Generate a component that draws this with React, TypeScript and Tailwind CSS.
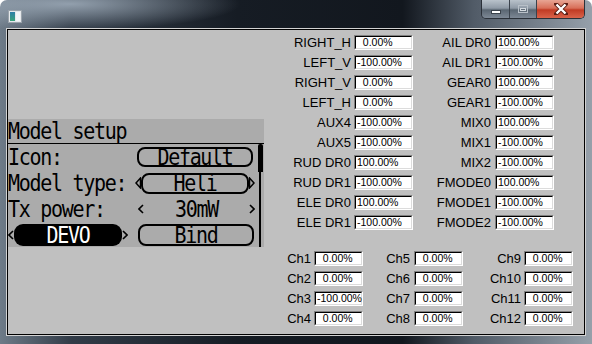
import React from 'react';

const topLeft: [string, string][] = [
  ['RIGHT_H', '  0.00%'],
  ['LEFT_V', '-100.00%'],
  ['RIGHT_V', '  0.00%'],
  ['LEFT_H', '  0.00%'],
  ['AUX4', '-100.00%'],
  ['AUX5', '-100.00%'],
  ['RUD DR0', '100.00%'],
  ['RUD DR1', '-100.00%'],
  ['ELE DR0', '100.00%'],
  ['ELE DR1', '-100.00%'],
];

const topRight: [string, string][] = [
  ['AIL DR0', '100.00%'],
  ['AIL DR1', '-100.00%'],
  ['GEAR0', '100.00%'],
  ['GEAR1', '-100.00%'],
  ['MIX0', '100.00%'],
  ['MIX1', '-100.00%'],
  ['MIX2', '-100.00%'],
  ['FMODE0', '100.00%'],
  ['FMODE1', '-100.00%'],
  ['FMODE2', '-100.00%'],
];

const chanValue = (n: number) => (n === 3 ? '-100.00%' : '  0.00%');

// sunken win32 edit box
const Field = ({ value, className }: { value: string; className: string }) => (
  <div
    className={`${className} h-[15px] border border-t-[#808080] border-l-[#808080] border-r-white border-b-white`}
  >
    <div className="h-full flex items-center bg-white border border-t-black border-l-black border-r-[#dcdcdc] border-b-[#dcdcdc] pl-px text-[10.5px] leading-none whitespace-pre text-black">
      {value}
    </div>
  </div>
);

const Chevron = ({ dir }: { dir: 'l' | 'r' }) => (
  <svg width="6" height="10" viewBox="0 0 6 10" className="shrink-0">
    <polyline
      points={dir === 'l' ? '5,1 1,5 5,9' : '1,1 5,5 1,9'}
      fill="none"
      stroke="black"
      strokeWidth="1.6"
    />
  </svg>
);

const Tri = ({ dir }: { dir: 'l' | 'r' }) => (
  <svg width="6" height="12" viewBox="0 0 6 12" className="shrink-0">
    <polygon
      points={dir === 'l' ? '5.5,1 1,6 5.5,11' : '0.5,1 5,6 0.5,11'}
      fill="none"
      stroke="black"
      strokeWidth="1.5"
    />
  </svg>
);

// lcd glyphs are taller than they are wide
const T = ({ children }: { children: React.ReactNode }) => (
  <span className="inline-block scale-y-[1.12]">{children}</span>
);

const Lcd = () => (
  <div className="w-[256px] h-[128px] bg-[#ababab] flex flex-col font-['DejaVu_Sans_Mono',monospace] text-[20px] leading-none tracking-[-1.3px] text-black">
    <div className="h-[24px] flex items-center">
      <T>Model setup</T>
    </div>
    <div className="flex-1 flex border-t border-black">
      <div className="flex-1 flex flex-col">
        <div className="h-[26px] flex items-center">
          <span className="w-[129px]">
            <T>Icon:</T>
          </span>
          <div className="w-[116px] h-[20px] border-2 border-black rounded-[8px] flex items-center justify-center">
            <T>Default</T>
          </div>
        </div>
        <div className="h-[26px] flex items-center">
          <span className="w-[127px]">
            <T>Model type:</T>
          </span>
          <Tri dir="l" />
          <div className="w-[108px] h-[21px] border-2 border-black rounded-[8px] flex items-center justify-center">
            <T>Heli</T>
          </div>
          <Tri dir="r" />
        </div>
        <div className="h-[26px] flex items-center">
          <span className="w-[130px]">
            <T>Tx power:</T>
          </span>
          <div className="w-[117px] flex items-center justify-between">
            <Chevron dir="l" />
            <T>30mW</T>
            <Chevron dir="r" />
          </div>
        </div>
        <div className="h-[25px] flex items-center">
          <Chevron dir="l" />
          <div className="w-[108px] h-[22px] bg-black text-white rounded-[9px] flex items-center justify-center">
            <T>DEVO</T>
          </div>
          <Chevron dir="r" />
          <div className="w-[10px]" />
          <div className="w-[116px] h-[22px] border-2 border-black rounded-[8px] flex items-center justify-center">
            <T>Bind</T>
          </div>
        </div>
      </div>
      <div className="w-[8px] flex flex-col items-center">
        <div className="w-[5px] h-[28px] bg-black rounded-t-[2px]" />
        <div className="w-[2px] flex-1 bg-black" />
      </div>
    </div>
  </div>
);

const AppIcon = () => (
  <svg width="14" height="13" viewBox="0 0 14 13">
    <defs>
      <linearGradient id="ic" x1="0" y1="0" x2="0" y2="1">
        <stop offset="0" stopColor="#2f7fa8" />
        <stop offset="1" stopColor="#3aa37a" />
      </linearGradient>
    </defs>
    <rect x="0.5" y="0.5" width="13" height="12" fill="#e6e9ec" stroke="#9aa3ab" />
    <rect x="2" y="2" width="5" height="9" fill="url(#ic)" />
    <rect x="8" y="2" width="4" height="9" fill="#f4f6f8" />
  </svg>
);

const WindowButtons = () => (
  <div className="flex h-[19px] rounded-b-[5px] overflow-hidden border border-t-0 border-[#2a3038]">
    <div className="w-[28px] flex items-center justify-center border-r border-[#3a424c] bg-[linear-gradient(180deg,#b9c2cb_0%,#8f9aa6_45%,#5a6672_55%,#7d8895_100%)]">
      <div className="w-[10px] h-[4px] bg-white border border-[#3b434c] mt-[5px]" />
    </div>
    <div className="w-[27px] flex items-center justify-center border-r border-[#3a424c] bg-[linear-gradient(180deg,#b9c2cb_0%,#8f9aa6_45%,#5a6672_55%,#7d8895_100%)]">
      <div className="w-[10px] h-[8px] border border-[#b8c0c8] flex items-center justify-center">
        <div className="w-[6px] h-[3px] border border-[#d4dadf] mt-[1px]" />
      </div>
    </div>
    <div className="w-[47px] flex items-center justify-center bg-[linear-gradient(180deg,#e8a594_0%,#d86f59_45%,#c13b24_55%,#d9634a_100%)]">
      <svg width="14" height="12" viewBox="0 0 14 12">
        <path d="M2 1 L12 11 M12 1 L2 11" stroke="#5a1d14" strokeWidth="4" strokeLinecap="round" />
        <path d="M2.5 1.5 L11.5 10.5 M11.5 1.5 L2.5 10.5" stroke="white" strokeWidth="2.4" />
      </svg>
    </div>
  </div>
);

export default function App() {
  return (
    <div className="w-[592px] h-[344px] bg-white font-['Liberation_Sans',Arial,sans-serif]">
      <div className="h-full rounded-t-[7px] flex flex-col px-[6px] pb-[8px] bg-[radial-gradient(ellipse_170px_26px_at_70px_4px,rgba(170,184,198,0.8),transparent),linear-gradient(90deg,#6e7b88_0%,#323c48_12%,#161c24_40%,#12171e_68%,#515b67_80%,#96a0aa_100%)]">
        <div className="h-[28px] flex items-start justify-between">
          <div className="ml-[2px] mt-[10px]">
            <AppIcon />
          </div>
          <div className="mr-px">
            <WindowButtons />
          </div>
        </div>
        <div className="flex-1 flex border border-[#d2d2d2]">
          <div className="flex-1 flex border border-black bg-[#c0c0c0] text-black">
            <div className="w-[256px] pt-[89px]">
              <Lcd />
            </div>
            <div className="flex-1 flex flex-col pt-[5px]">
              <div className="flex">
                <div className="flex flex-col">
                  {topLeft.map(([l, v]) => (
                    <div key={l} className="h-[20px] flex items-start">
                      <span className="w-[90px] pr-[3px] text-right text-[13px] leading-[15px]">{l}</span>
                      <Field value={v} className="w-[59px]" />
                    </div>
                  ))}
                </div>
                <div className="flex flex-col">
                  {topRight.map(([l, v]) => (
                    <div key={l} className="h-[20px] flex items-start">
                      <span className="w-[82px] pr-[4px] text-right text-[13px] leading-[15px]">{l}</span>
                      <Field value={v} className="w-[59px]" />
                    </div>
                  ))}
                </div>
              </div>
              <div className="mt-[16px] ml-[16px] flex flex-col">
                {[1, 2, 3, 4].map((r) => (
                  <div key={r} className="h-[20px] flex items-start">
                    <span className="w-[34px] pr-[3px] text-right text-[13px] leading-[15px]">Ch{r}</span>
                    <Field value={chanValue(r)} className="w-[49px]" />
                    <span className="w-[51px] pr-[4px] text-right text-[13px] leading-[15px]">Ch{r + 4}</span>
                    <Field value={chanValue(r + 4)} className="w-[49px]" />
                    <span className="w-[61px] pr-[3px] text-right text-[13px] leading-[15px]">Ch{r + 8}</span>
                    <Field value={chanValue(r + 8)} className="w-[49px]" />
                  </div>
                ))}
              </div>
            </div>
          </div>
        </div>
      </div>
    </div>
  );
}
